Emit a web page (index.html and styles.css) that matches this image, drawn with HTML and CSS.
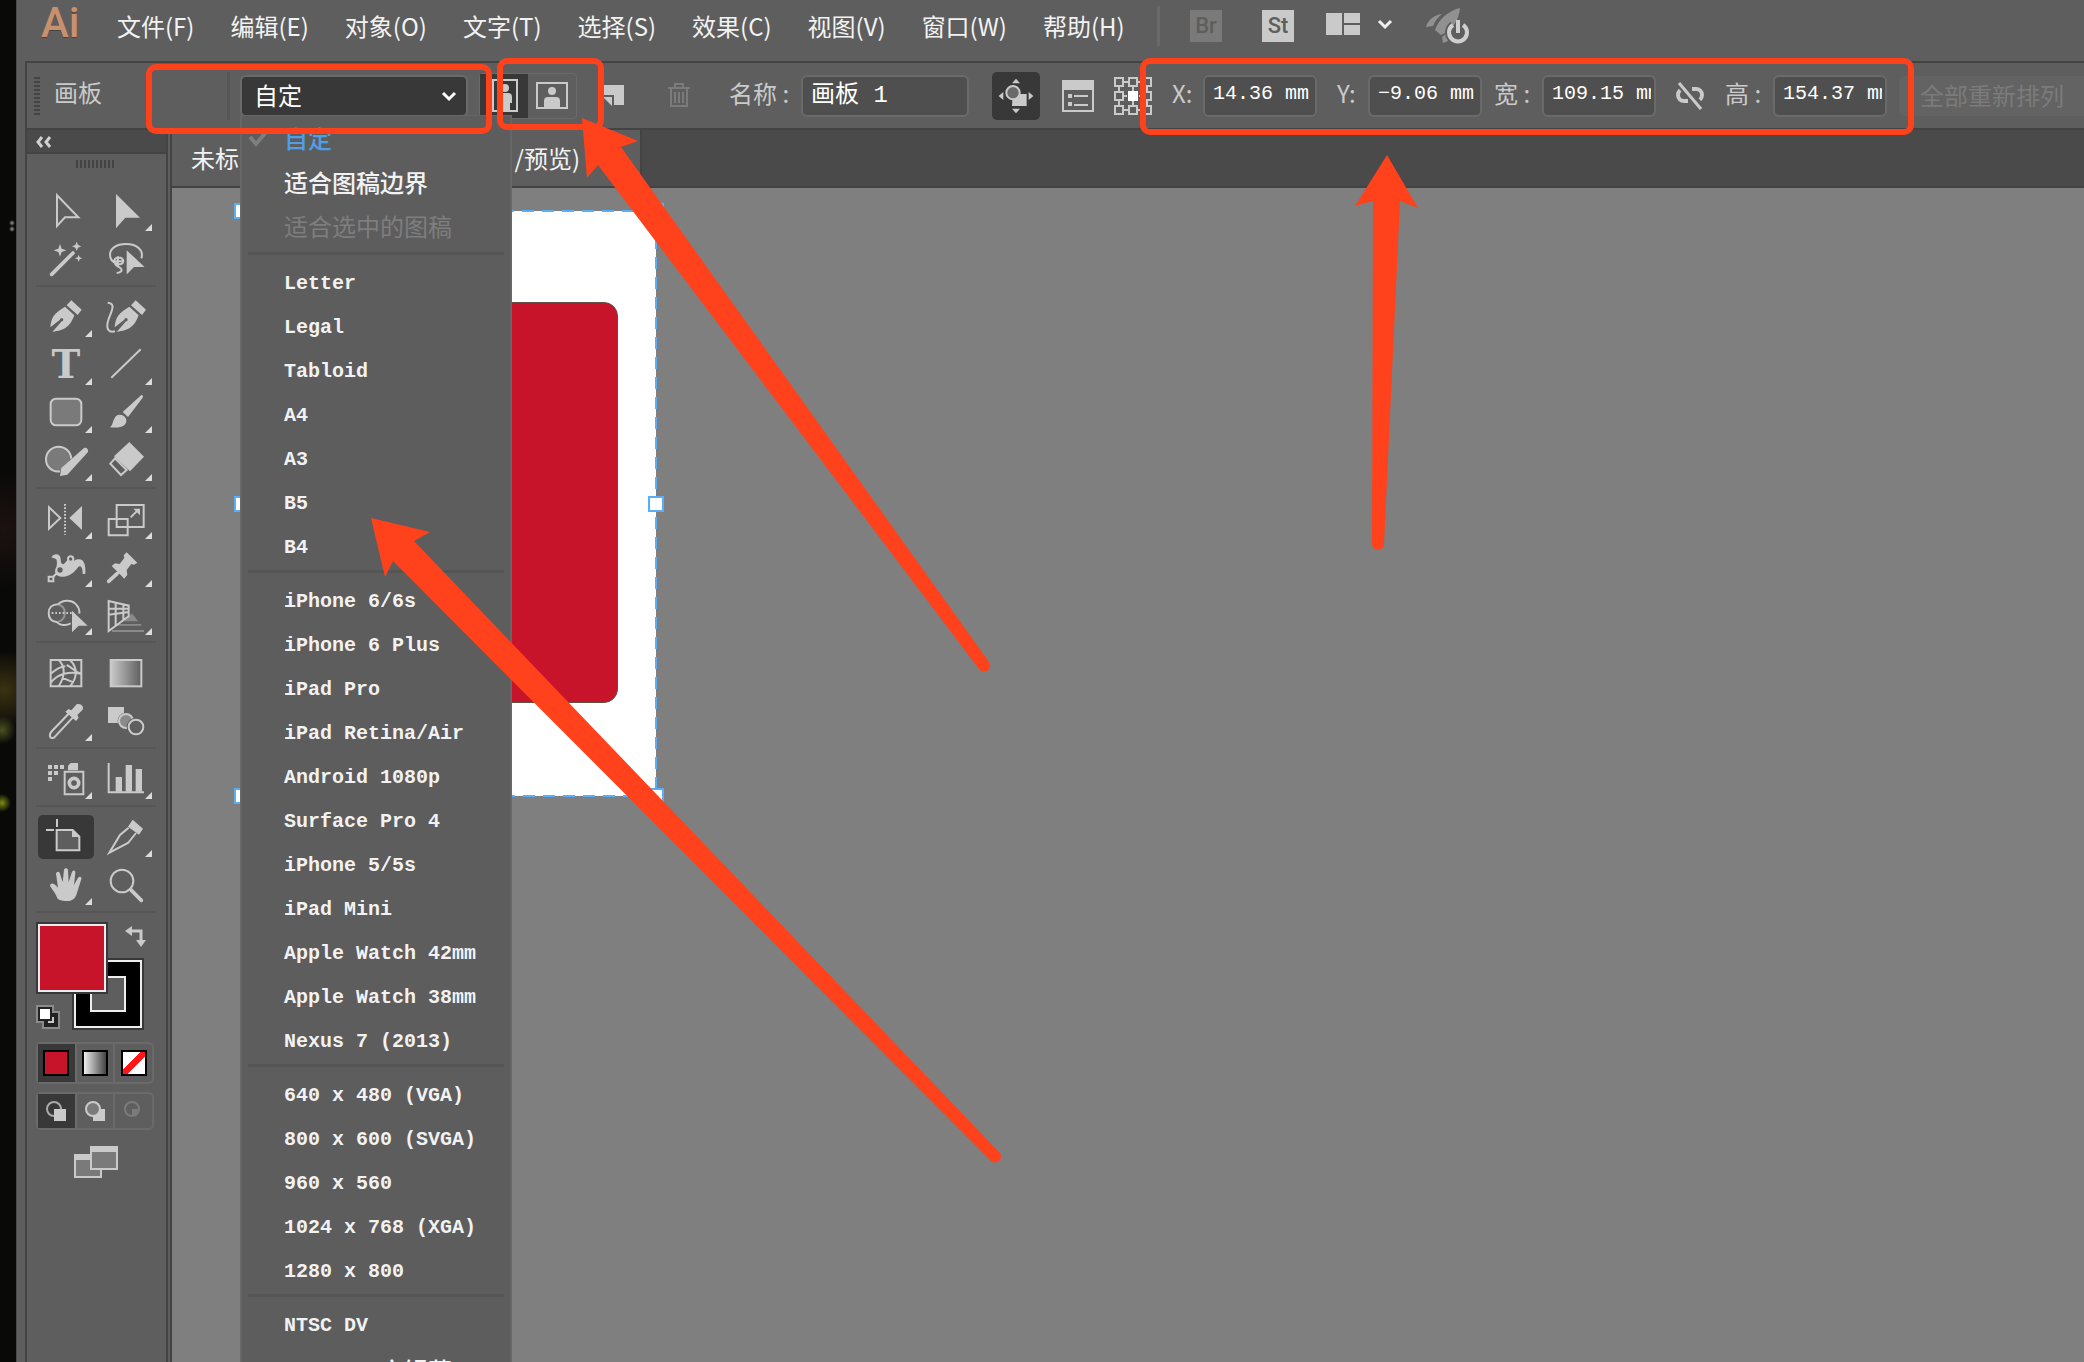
FILE: index.html
```html
<!DOCTYPE html>
<html lang="zh-CN">
<head>
<meta charset="utf-8">
<title>Ai</title>
<link rel="stylesheet" href="styles.css">
</head>
<body>
<div class="desktop"></div>
<div class="app">
  <header class="menubar">
    <span class="logo">Ai</span>
    <nav class="menus">
      <button>文件(F)</button><button>编辑(E)</button><button>对象(O)</button><button>文字(T)</button><button>选择(S)</button><button>效果(C)</button><button>视图(V)</button><button>窗口(W)</button><button>帮助(H)</button>
    </nav>
    <div class="menu-tools">
      <button class="badge badge-off">Br</button>
      <button class="badge">St</button>
      <button class="plain" aria-label="排列文档">
        <svg width="68" height="26" viewBox="0 0 68 26"><path fill="#cacaca" d="M0 0h16v22H0zM18 0h16v10H18zM18 12h16v10H18z"/><path d="M53 8l6 6 6-6" fill="none" stroke="#f0f0f0" stroke-width="3"/></svg>
      </button>
      <button class="plain rocket" aria-label="GPU 性能">
        <svg width="44" height="36" viewBox="0 0 44 36"><path fill="#919191" d="M34 0C22 3 13 11 9 22l6 5c10-4 18-14 19-27zM16 6C8 7 2 12 0 19l7-1C9 13 12 9 16 6zM16 29l6-5v9l-5 2z"/><path d="M27 17a9 9 0 1 0 10 0" fill="none" stroke="#5e5e5e" stroke-width="8"/><path d="M27 17a9 9 0 1 0 10 0M32 12v13" fill="none" stroke="#cfcfcf" stroke-width="4"/></svg>
      </button>
    </div>
  </header>

  <div class="control">
    <span class="grip"></span>
    <span class="title">画板</span>
    <span class="rule"></span>
    <div class="preset">
      <select aria-label="预设"><option>自定</option></select>
      <svg class="chevron" width="16" height="12" viewBox="0 0 16 12"><path d="M2 2l6 6 6-6" fill="none" stroke="#fff" stroke-width="3"/></svg>
    </div>
    <div class="orient">
      <button class="on" aria-label="纵向"><svg width="26" height="34" viewBox="0 0 26 34"><rect x="1" y="1" width="24" height="31" fill="none" stroke="#cacaca" stroke-width="2"/><circle cx="13" cy="9" r="4" fill="#cacaca"/><path fill="#cacaca" d="M6 24v-6q0-4 4-4h6q4 0 4 4v6h-2v8H8v-8z"/></svg></button>
      <button aria-label="横向"><svg width="32" height="28" viewBox="0 0 32 28"><rect x="1" y="1" width="30" height="25" fill="none" stroke="#cacaca" stroke-width="2"/><circle cx="16" cy="9" r="4" fill="#cacaca"/><path fill="#cacaca" d="M8 26v-7q0-4 4-4h8q4 0 4 4v7z"/></svg></button>
    </div>
    <button class="plain new" aria-label="新建画板"><svg width="22" height="22" viewBox="0 0 22 22"><path fill="#cacaca" d="M0 0h21v20H11V10H0z"/><path fill="#cacaca" d="M0 12h9v9z"/></svg></button>
    <button class="plain trash" aria-label="删除画板"><svg width="24" height="26" viewBox="0 0 24 26"><path d="M1 5h22M4 6v17h16V6M8 4V1h8v3M8 9v11M12 9v11M16 9v11" fill="none" stroke="#7b7b7b" stroke-width="2"/></svg></button>
    <label class="field name"><span class="cap">名称 :</span><input value="画板 1"></label>
    <button class="move" aria-label="移动图稿"><svg width="48" height="48" viewBox="0 0 144 144"><path fill="#cacaca" d="M72 20l12 14H60zM72 124l12-14H60zM20 72l14-12v24zM124 72l-14-12v24zM62 66h42v36H60z"/><circle cx="63" cy="62" r="20" fill="#6a6a6a" stroke="#cacaca" stroke-width="6"/></svg></button>
    <button class="plain list" aria-label="画板选项"><svg width="32" height="32" viewBox="0 0 32 32"><rect x="1" y="1" width="30" height="30" fill="none" stroke="#cacaca" stroke-width="2"/><path fill="#cacaca" d="M0 0h32v10H0zM6 14h4v4H6zM6 22h4v4H6zM12 15h14v2H12zM12 24h14v2H12z"/></svg></button>
    <button class="plain ref" aria-label="参考点"><svg width="38" height="38" viewBox="0 0 38 38"><g fill="none" stroke="#cacaca" stroke-width="2"><path d="M5 5h28v28H5zM19 5v10M19 23v10M5 19h8M25 19h8"/><g fill="#5e5e5e"><path d="M1 1h8v8H1zM15 1h8v8h-8zM29 1h8v8h-8zM1 15h8v8H1zM29 15h8v8h-8zM1 29h8v8H1zM15 29h8v8h-8zM29 29h8v8h-8z"/></g></g><path fill="#fff" d="M14 14h10v10H14z"/></svg></button>
    <label class="field x"><span class="cap">X:</span><input value="14.36 mm"></label>
    <label class="field y"><span class="cap">Y:</span><input value="−9.06 mm"></label>
    <label class="field w"><span class="cap">宽 :</span><input value="109.15 mm"></label>
    <button class="plain link" aria-label="约束宽度和高度比例"><svg width="28" height="28" viewBox="0 0 28 28"><g fill="none" stroke="#cacaca" stroke-width="4"><path d="M12 7H8a6 6 0 0 0 0 12h4M16 7h4a6 6 0 0 1 0 12h-4"/></g><path d="M3 1l24 26" stroke="#5e5e5e" stroke-width="8"/><path d="M3 1l22 26" stroke="#cacaca" stroke-width="3"/></svg></button>
    <label class="field h"><span class="cap">高 :</span><input value="154.37 mm"></label>
    <button class="rearrange" disabled>全部重新排列</button>
  </div>

  <div class="work">
    <aside class="tools">
      <div class="tools-head"><svg width="16" height="12" viewBox="0 0 16 12"><path d="M6 1L2 6l4 5M14 1l-4 5 4 5" fill="none" stroke="#d0d0d0" stroke-width="3"/></svg></div>
      <div class="tools-grip"><span></span></div>
      <div class="group">
        <button aria-label="选择"><svg viewBox="108 201 180 144"><path class="s" d="M171 226v92l24-26h40z"/></svg></button>
        <button class="more" aria-label="直接选择"><svg viewBox="288 201 180 144"><path class="f" d="M348 222v103l28-32h44z"/></svg></button>
        <button aria-label="魔棒"><svg viewBox="108 345 180 144"><path d="M155 463l64-64" class="s thick"/><path class="f" d="M180 372l5 14 14 5-14 5-5 14-5-14-14-5 14-5zM230 365l4 10 10 4-10 4-4 10-4-10-10-4 10-4zM236 404l3 8 8 3-8 3-3 8-3-8-8-3 8-3z"/></svg></button>
        <button aria-label="套索"><svg viewBox="288 345 180 144"><path class="s" d="M424 415c8-24-12-43-46-43-30 0-48 14-48 32 0 26 38 38 40 20 1-14-28-16-27 0 0 18 24 16 22 26-1 5-6 8-15 9M354 409v30M340 424h30"/><path class="f" stroke="#5e5e5e" stroke-width="4" d="M378 386v82l25-25h36z"/></svg></button>
      </div>
      <div class="group">
        <button class="more" aria-label="钢笔"><svg viewBox="108 519 180 144"><path class="f" d="M151 622c2-28 10-42 44-62l28 26c-14 36-28 44-66 50l28-32a5 5 0 1 0-5-5zM200 556l14-15 31 28-12 16z"/></svg></button>
        <button aria-label="曲率"><svg viewBox="288 519 180 144"><path class="f" d="M344 622c2-28 10-42 44-62l28 26c-14 36-28 44-66 50l28-32a5 5 0 1 0-5-5zM393 556l14-15 31 28-12 16z"/><path class="s" d="M323 548c18 2 18 12 8 36-14 32-14 56 14 50"/></svg></button>
        <button class="more" aria-label="文字"><svg viewBox="108 663 180 144"><text x="198" y="775" text-anchor="middle" class="t">T</text></svg></button>
        <button class="more" aria-label="直线段"><svg viewBox="288 663 180 144"><path d="M334 773l88-85" class="s"/></svg></button>
        <button class="more" aria-label="圆角矩形"><svg viewBox="108 807 180 144"><rect x="152" y="836" width="92" height="80" rx="16" class="s" fill="#7a7a7a"/></svg></button>
        <button class="more" aria-label="画笔"><svg viewBox="288 807 180 144"><path class="f" d="M330 922c12-10 8-36 28-38 18-1 26 16 18 28-8 11-26 12-46 10zM368 876l56-51c5 0 6 3 4 8l-44 58z"/></svg></button>
        <button class="more" aria-label="Shaper"><svg viewBox="108 951 180 144"><path class="s" fill="#7a7a7a" d="M180 1054c-26 4-42-16-42-36 0-22 18-38 38-38s36 14 38 36"/><path class="f" d="M180 1068l4-24 68-60c8-2 14 4 12 12l-62 68z"/></svg></button>
        <button class="more" aria-label="橡皮擦"><svg viewBox="288 951 180 144"><path class="f" d="M388 966l44 44-42 44-48-45z"/><path class="s" d="M345 1015l-14 16 32 34 17-15z"/></svg></button>
      </div>
      <div class="group">
        <button class="more" aria-label="镜像"><svg viewBox="108 39 180 144"><path class="s" d="M147 76v64l34-32z"/><path class="f" d="M246 72v72l-38-36z"/><path d="M195 66v92" class="s" stroke-dasharray="5 5"/></svg></button>
        <button class="more" aria-label="比例缩放"><svg viewBox="288 39 180 144"><path class="s" d="M350 69h81v66h-81zM326 111h57v49h-57zM392 106l20-20"/><path class="f" d="M400 80h20v20z"/></svg></button>
        <button class="more" aria-label="宽度"><svg viewBox="108 183 180 144"><path class="f" d="M154 226c8-14 28-12 28 6 0 12 4 16 10 14l16-18c8 16 12 8 24 4 20-4 26 16 24 44h-8c0-20-6-28-14-20-10 14-26 30-48 28-20-2-24-12-18-24 4-12 4-30-2-30z"/><path d="M153 291l27-27 32-33" class="s"/><g class="s" fill="#5e5e5e"><circle cx="180" cy="264" r="11"/><path d="M146 284h14v14h-14z"/><circle cx="212" cy="231" r="8"/></g></svg></button>
        <button class="more" aria-label="操控变形"><svg viewBox="288 183 180 144"><path class="f" d="M380 211l32 31-10 6-8-2-14 18 2 14-9 12-38-38 10-8 14 2 14-18-2-8z"/><path d="M326 298l26-24" class="s thick"/></svg></button>
        <button class="more" aria-label="形状生成器"><svg viewBox="108 327 180 144"><path class="s" d="M212 424c-14 8-34 6-42-4-16-2-24-12-24-27s10-26 28-26c14-14 40-14 52-2 8 8 14 16 12 30"/><path class="s" d="M176 368c24 6 26 44-2 52" opacity=".5"/><path d="M155 393h60" class="s" stroke-dasharray="5 6"/><path class="f" d="M216 386v65l20-20h27z"/></svg></button>
        <button class="more" aria-label="透视网格"><svg viewBox="288 327 180 144"><path fill="#8a8a8a" d="M372 418l24-24 18 24zM350 426h74v5h-80zM336 444h96v6h-96z"/><path class="s" d="M326 357v90l60-44v-32zM347 362v68M370 366v48M326 398l60-8M326 380l60 0"/></svg></button>
      </div>
      <div class="group">
        <button aria-label="网格"><svg viewBox="108 504 180 144"><path class="s" d="M152 537h92v79h-92zM176 537c24 22 16 54 0 79M210 537c26 26 20 56 0 79M152 578c20-16 34-22 44-22M152 606c20-28 58-36 90-28M200 552c18 8 22 20 42 26M186 590l34 14"/></svg></button>
        <button aria-label="渐变"><svg viewBox="288 504 180 144"><defs><linearGradient id="g1"><stop offset="0" stop-color="#cacaca"/><stop offset="1" stop-color="#5e5e5e"/></linearGradient></defs><rect x="332" y="537" width="92" height="79" class="s" fill="url(#g1)"/></svg></button>
        <button class="more" aria-label="吸管"><svg viewBox="108 648 180 144"><path class="s" d="M208 696l-52 54c-10 10-8 26 6 20l56-60"/><path class="f" d="M196 692l10-8 8 4 16-18c14-4 22 8 18 16l-16 16 4 8-8 10z"/></svg></button>
        <button aria-label="混合"><svg viewBox="288 648 180 144"><path class="f" d="M324 678h48v48h-48z"/><circle cx="378" cy="720" r="25" fill="#5e5e5e"/><circle cx="378" cy="720" r="21" class="s" fill="#8a8a8a"/><circle cx="408" cy="738" r="28" fill="#5e5e5e"/><circle cx="408" cy="738" r="22" class="s" fill="none"/></svg></button>
      </div>
      <div class="group">
        <button class="more" aria-label="符号喷枪"><svg viewBox="108 822 180 144"><path class="f" d="M144 852h12v12h-12zM162 852h12v12h-12zM180 852h12v12h-12zM144 870h12v12h-12zM162 870h12v12h-12zM144 888h12v12h-12zM204 868v-14l8-8h22v22z"/><path class="s" d="M194 872h56v68h-56z"/><circle cx="222" cy="906" r="14" class="s thick"/></svg></button>
        <button class="more" aria-label="柱形图"><svg viewBox="288 822 180 144"><path d="M326 846v88h106" class="s"/><path class="f" d="M347 888h19v44h-19zM377 852h19v80h-19zM407 864h19v68h-19z"/></svg></button>
      </div>
      <div class="group">
        <button class="active" aria-label="画板"><svg viewBox="108 996 180 144"><path class="s" fill="#5e5e5e" d="M170 1047h48l20 20v41h-68z"/><path class="f" d="M216 1046v22h24z"/><path d="M171 1014v24M138 1047h24" class="s"/></svg></button>
        <button class="more" aria-label="切片"><svg viewBox="288 996 180 144"><path class="f" d="M398 1016l31 27-12 18-33-24z"/><path class="s" d="M386 1040l-26 22-32 53 56-29 24-30"/></svg></button>
        <button class="more" aria-label="抓手"><svg viewBox="108 1140 180 144"><path class="f" d="M172 1252c-6-18-16-26-22-38 2-10 12-8 24 6l-6-42c2-8 10-8 12 0l8 26 4-38c2-6 10-6 12 0l2 38 10-32c4-6 12-4 10 4l-4 36 12-22c6-6 12-2 10 4l-12 38c-4 14-8 28-32 28-16 0-22-2-28-8z"/></svg></button>
        <button aria-label="缩放"><svg viewBox="288 1140 180 144"><circle cx="366" cy="1200" r="34" class="s"/><path d="M392 1226l32 32" class="s thick"/></svg></button>
      </div>
      <div class="paint">
        <span class="stroke"></span>
        <span class="fill"></span>
        <svg class="swap" width="22" height="22" viewBox="0 0 22 22"><path d="M6 5h10v10" fill="none" stroke="#cacaca" stroke-width="3"/><path fill="#cacaca" d="M0 5l7-5v10zM16 21l-5-7h10z"/></svg>
        <svg class="default" width="24" height="24" viewBox="0 0 24 24"><path fill="#8b8b8b" d="M0 0h18v6h6v18H6v-6H0z"/><path fill="#222" d="M2 2h14v6h6v14H8v-6H2z"/><path fill="#fff" d="M4 4h10v10H4z"/><path d="M12 17h5v-5" stroke="#cacaca" stroke-width="2" fill="none"/></svg>
      </div>
      <div class="seg color">
        <button class="on" aria-label="颜色"><span class="chip red"></span></button><button aria-label="渐变填色"><span class="chip grad"></span></button><button aria-label="无"><span class="chip none"></span></button>
      </div>
      <div class="seg mode">
        <button class="on" aria-label="正常绘图"><svg width="22" height="22" viewBox="0 0 22 22"><circle cx="9" cy="9" r="7" fill="none" stroke="#aaa" stroke-width="2"/><path fill="#cacaca" d="M9 9h12v12H9z"/></svg></button><button aria-label="背面绘图"><svg width="22" height="22" viewBox="0 0 22 22"><path fill="#cacaca" d="M9 9h12v12H9z"/><circle cx="9" cy="9" r="7" fill="#7a7a7a" stroke="#cacaca" stroke-width="2"/></svg></button><button aria-label="内部绘图"><svg width="22" height="22" viewBox="0 0 22 22"><circle cx="9" cy="9" r="7" fill="none" stroke="#7b7b7b" stroke-width="2"/><path fill="#7b7b7b" d="M9 9h7q0 6-7 7z"/></svg></button>
      </div>
      <button class="plain screen" aria-label="更改屏幕模式"><svg width="44" height="32" viewBox="0 0 44 32"><rect x="1" y="9" width="26" height="22" fill="#7a7a7a" stroke="#cacaca" stroke-width="2"/><path fill="#cacaca" d="M0 8h17v6H0z"/><rect x="17" y="1" width="26" height="22" fill="#7a7a7a" stroke="#cacaca" stroke-width="2"/><path fill="#cacaca" d="M16 0h28v6H16z"/></svg></button>
    </aside>

    <main class="document">
      <div class="tabs">
        <div class="tab"><span>未标题-1*</span><span class="tail">/预览)</span><span class="close">×</span></div>
      </div>
      <div class="canvas">
        <div class="artboard">
          <div class="shape"></div>
          <svg class="outline" width="100%" height="100%"><rect width="100%" height="100%"/></svg>
          <i class="handle tl"></i><i class="handle ml"></i><i class="handle bl"></i>
          <i class="handle tr"></i><i class="handle mr"></i><i class="handle br"></i>
        </div>
      </div>
    </main>
  </div>
</div>

<div class="dropdown">
  <ul>
    <li class="cjk current"><svg width="22" height="20" viewBox="0 0 22 20"><path d="M2 9l6 7L19 3" fill="none" stroke="#7e7e7e" stroke-width="4"/></svg>自定</li>
    <li class="cjk">适合图稿边界</li>
    <li class="cjk off">适合选中的图稿</li>
  </ul>
  <ul>
    <li>Letter</li><li>Legal</li><li>Tabloid</li><li>A4</li><li>A3</li><li>B5</li><li>B4</li>
  </ul>
  <ul>
    <li>iPhone 6/6s</li><li>iPhone 6 Plus</li><li>iPad Pro</li><li>iPad Retina/Air</li><li>Android 1080p</li><li>Surface Pro 4</li><li>iPhone 5/5s</li><li>iPad Mini</li><li>Apple Watch 42mm</li><li>Apple Watch 38mm</li><li>Nexus 7 (2013)</li>
  </ul>
  <ul>
    <li>640 x 480 (VGA)</li><li>800 x 600 (SVGA)</li><li>960 x 560</li><li>1024 x 768 (XGA)</li><li>1280 x 800</li>
  </ul>
  <ul>
    <li>NTSC DV</li><li>NTSC DV <span class="wide">宽银幕</span></li>
  </ul>
</div>

<svg class="notes" width="2084" height="1362" viewBox="0 0 2084 1362">
  <g fill="none" stroke="#ff421c" stroke-width="6">
    <rect x="149" y="67" width="340" height="64" rx="7"/>
    <rect x="500" y="61" width="101" height="66" rx="7"/>
    <rect x="1143" y="61" width="768" height="71" rx="7"/>
  </g>
  <g fill="#ff421c">
    <path d="M371 518L430 532 414 541 999 1152A6 6 0 0 1 991 1161L393 561 385 577Z"/>
    <path d="M582 118L638 141 621 147 989 662A6 6 0 0 1 979 669L598 165 587 178Z"/>
    <path d="M1387 155L1418 208 1400 201 1384 544A6 6 0 0 1 1372 544L1373 201 1355 206Z"/>
  </g>
</svg>
</body>
</html>
```
FILE: styles.css
```css
* { box-sizing: border-box; }

body {
  margin: 0;
  height: 100vh;
  display: flex;
  overflow: hidden;
  position: relative;
  background: #5e5e5e;
  color: #f2f2f2;
  font: 24px/32px "Noto Sans CJK SC", sans-serif;
}

button, input, select { font: inherit; color: inherit; }
button { padding: 0; border: 0; background: none; }
svg { display: block; flex: none; }
ul { margin: 0; padding: 0; list-style: none; }

.desktop {
  flex: none;
  width: 16px;
  background:
    radial-gradient(circle at 2px 803px, #7d8a12 0, transparent 9px),
    radial-gradient(circle at 2px 730px, #4c5220 0, transparent 14px),
    radial-gradient(circle at 4px 690px, #3b3212 0, transparent 40px),
    radial-gradient(circle at 12px 223px, #999 0, transparent 3px),
    radial-gradient(circle at 12px 229px, #999 0, transparent 3px),
    radial-gradient(circle at 4px 530px, #1c1210 0, transparent 60px),
    #090908;
}

.app {
  flex: 1;
  min-width: 0;
  display: flex;
  flex-direction: column;
  border-left: 1px solid #4a4a4a;
}

/* Menu bar */
.menubar {
  flex: none;
  height: 61px;
  display: flex;
  padding-left: 24px;
}
.logo {
  width: 60px;
  color: #c8916e;
  font: 500 42px/46px Roboto, sans-serif;
  text-shadow: 0 1px 0 #444;
}
.menus { display: flex; width: 1056px; padding: 10px 0 0 16px; gap: 36px; align-items: flex-start; }
.menus button { white-space: nowrap; line-height: 32px; }
.menu-tools {
  display: flex;
  align-items: center;
  gap: 32px;
  height: 40px;
  margin-top: 6px;
  padding-left: 30px;
  border-left: 3px solid #6a6a6a;
}
.badge {
  width: 32px;
  height: 32px;
  margin-right: 8px;
  background: #cacaca;
  color: #5e5e5e;
  font: 500 22px/32px Roboto, sans-serif;
}
.badge + .plain { margin-left: -8px; }
.badge-off { background: #7a7a7a; }

/* Control bar */
.control {
  flex: none;
  height: 69px;
  margin-left: 8px;
  display: flex;
  align-items: center;
  overflow: hidden;
  border: 2px solid #434343;
  border-width: 2px 0 2px 2px;
  color: #cacaca;
}
.control > * { flex: none; }
.grip {
  width: 6px;
  height: 38px;
  margin-left: 7px;
  background: repeating-linear-gradient(#444 0 2px, transparent 2px 4px);
}
.title { width: 156px; margin-left: 14px; padding: 0 0 8px; }
.rule { width: 3px; height: 48px; margin-left: 17px; background: #565656; }
.preset { position: relative; margin-left: 10px; }
.preset select {
  display: block;
  width: 228px;
  height: 42px;
  padding: 0 12px 2px;
  appearance: none;
  border: 2px solid #6a6a6a;
  border-radius: 6px;
  background: #383838;
  color: #fff;
}
.chevron { position: absolute; right: 11px; top: 16px; pointer-events: none; }
.orient { display: flex; margin-left: 11px; height: 46px; border: 1px solid #6a6a6a; border-radius: 4px; }
.orient button { width: 48px; display: grid; place-items: center; }
.orient .on { background: #383838; justify-items: end; padding-right: 10px; }
.new { margin-left: 26px; }
.trash { margin-left: 42px; }
.field { display: flex; align-items: center; }
.field input {
  width: 114px;
  height: 42px;
  padding: 0 3px 4px 8px;
  border: 2px solid #6a6a6a;
  border-radius: 6px;
  background: #4f4f4f;
  color: #fff;
  font: 20px/32px "Liberation Mono", monospace;
}
.cap { width: 31px; white-space: nowrap; padding-bottom: 6px; }
.name { margin-left: 38px; }
.name .cap { width: 72px; }
.name input { width: 168px; padding-bottom: 8px; font: 24px/30px "Liberation Mono", "Noto Sans CJK SC", monospace; }
.w .cap, .h .cap { width: 48px; }
.move { margin-left: 23px; border-radius: 5px; background: #383838; }
.list { margin-left: 22px; }
.ref { margin-left: 20px; }
.x, .y { margin-left: 20px; }
.w { margin-left: 12px; }
.link { margin-left: 20px; }
.h { margin-left: 21px; }
.rearrange {
  width: 220px;
  height: 40px;
  margin-left: 12px;
  padding: 0 0 2px 21px;
  border-radius: 5px;
  background: #636363;
  color: #7b7b7b;
  text-align: left;
}

/* Work area */
.work { flex: 1; min-height: 0; display: flex; padding-left: 8px; }
.tools {
  flex: none;
  width: 147px;
  border: 2px solid #434343;
  border-width: 0 6px 0 2px;
  border-right-style: double;
}
.tools-head { height: 24px; padding: 6px 0 0 9px; border-bottom: 2px solid #434343; background: #4a4a4a; }
.tools-grip { height: 33px; padding: 6px 0 0 49px; }
.tools-grip span {
  display: block;
  width: 40px;
  height: 8px;
  background: repeating-linear-gradient(90deg, #444 0 2px, transparent 2px 4px);
}
.group {
  display: grid;
  grid-template-columns: 60px 60px;
  width: 120px;
  margin-left: 9px;
  padding-bottom: 2px;
  margin-bottom: 6px;
  border-bottom: 2px solid #565656;
}
.group button { position: relative; width: 60px; height: 48px; }
.group svg { position: relative; width: 60px; height: 48px; }
.more::after {
  content: "";
  position: absolute;
  left: 49px;
  top: 37px;
  width: 7px;
  height: 7px;
  background: #dcdcdc;
  clip-path: polygon(100% 0, 100% 100%, 0 100%);
}
.active::before {
  content: "";
  position: absolute;
  inset: 2px;
  border-radius: 5px;
  background: #383838;
}
.f { fill: #cacaca; }
.s { fill: none; stroke: #cacaca; stroke-width: 6px; }
.s[fill="#7a7a7a"] { fill: #7a7a7a; }
.s[fill="#5e5e5e"] { fill: #5e5e5e; }
.s[fill="#8a8a8a"] { fill: #8a8a8a; }
.s[fill="url(#g1)"] { fill: url(#g1); }
.thick { stroke-width: 11px; stroke-linecap: round; }
.t { fill: #cacaca; font: bold 116px "DejaVu Serif", serif; }

.paint { position: relative; width: 118px; height: 108px; margin: 9px 0 0 9px; }
.fill, .stroke { position: absolute; width: 72px; height: 72px; border: 2px solid #383838; }
.fill { left: 0; top: 0; background: #c8142b; box-shadow: inset 0 0 0 2px #eee; }
.stroke { right: 10px; bottom: 0; background: #000; box-shadow: inset 0 0 0 2px #eee; }
.stroke::after {
  content: "";
  position: absolute;
  inset: 16px;
  border: 2px solid #eee;
  background: #5e5e5e;
}
.swap { position: absolute; right: 7px; top: 4px; }
.default { position: absolute; left: 0; bottom: 1px; }

.seg { display: flex; width: 118px; margin: 12px 0 0 9px; border: 2px solid #6a6a6a; border-radius: 5px; }
.seg button { flex: 1; display: grid; place-items: center; }
.seg button + button { border-left: 2px solid #6a6a6a; }
.seg .on { background: #383838; }
.color { height: 42px; }
.mode { height: 38px; margin-top: 8px; }
.chip { width: 26px; height: 26px; border: 2px solid #000; }
.red { background: #c8142b; }
.grad { background: linear-gradient(90deg, #eee, #444); }
.none { background: linear-gradient(135deg, #fff 40%, #ff1616 40% 60%, #fff 60%); }
.screen { margin: 16px 0 0 47px; }

/* Document */
.document { flex: 1; min-width: 0; display: flex; flex-direction: column; }
.tabs { flex: none; height: 58px; border-bottom: 2px solid #434343; background: #4a4a4a; }
.tab {
  display: flex;
  align-items: center;
  width: 470px;
  height: 56px;
  padding: 0 14px 0 19px;
  border-right: 2px solid #434343;
  background: #5e5e5e;
  white-space: nowrap;
}
.tail { margin-left: auto; }
.close { margin-left: 22px; }
.canvas { flex: 1; position: relative; overflow: hidden; background: #7f7f7f; }
.artboard { position: absolute; left: 70px; top: 23px; width: 414px; height: 585px; background: #fff; }
.shape {
  position: absolute;
  inset: 91px 38px 93px;
  border: 1px solid #5e5247;
  border-radius: 14px;
  background: #c8142b;
}
.outline { position: absolute; inset: 0; overflow: visible; }
.outline rect { fill: none; stroke: #5aaef5; stroke-width: 2px; stroke-dasharray: 12px 8px; }
.handle { position: absolute; width: 16px; height: 16px; border: 2px solid #5aaef5; background: #fff; }
.tl, .ml, .bl { left: -8px; }
.tr, .mr, .br { right: -8px; }
.tl, .tr { top: -8px; }
.ml, .mr { top: 285px; }
.bl, .br { bottom: -8px; }

/* Preset list */
.dropdown {
  position: absolute;
  left: 240px;
  top: 115px;
  bottom: 0;
  width: 272px;
  overflow: hidden;
  border: 2px solid #666;
  border-width: 1px 2px 0;
  background: #5d5d5d;
}
.dropdown ul { margin: 0 6px; }
.dropdown ul:first-child { padding-bottom: 4px; }
.dropdown ul + ul { border-top: 3px solid #555; padding-top: 7px; }
.dropdown li {
  display: flex;
  align-items: center;
  height: 44px;
  padding-left: 36px;
  white-space: pre;
  font: bold 20px/44px "Liberation Mono", "Noto Sans CJK SC", monospace;
}
.dropdown .cjk { font: 500 24px/44px "Noto Sans CJK SC", sans-serif; }
.dropdown .wide { font: 500 24px/44px "Noto Sans CJK SC", sans-serif; }
.dropdown .off { color: #7e7e7e; font-weight: 400; }
.dropdown .current { padding-left: 0; gap: 14px; color: #4f9fe8; }

.notes { position: absolute; left: 0; top: 0; pointer-events: none; }
```
